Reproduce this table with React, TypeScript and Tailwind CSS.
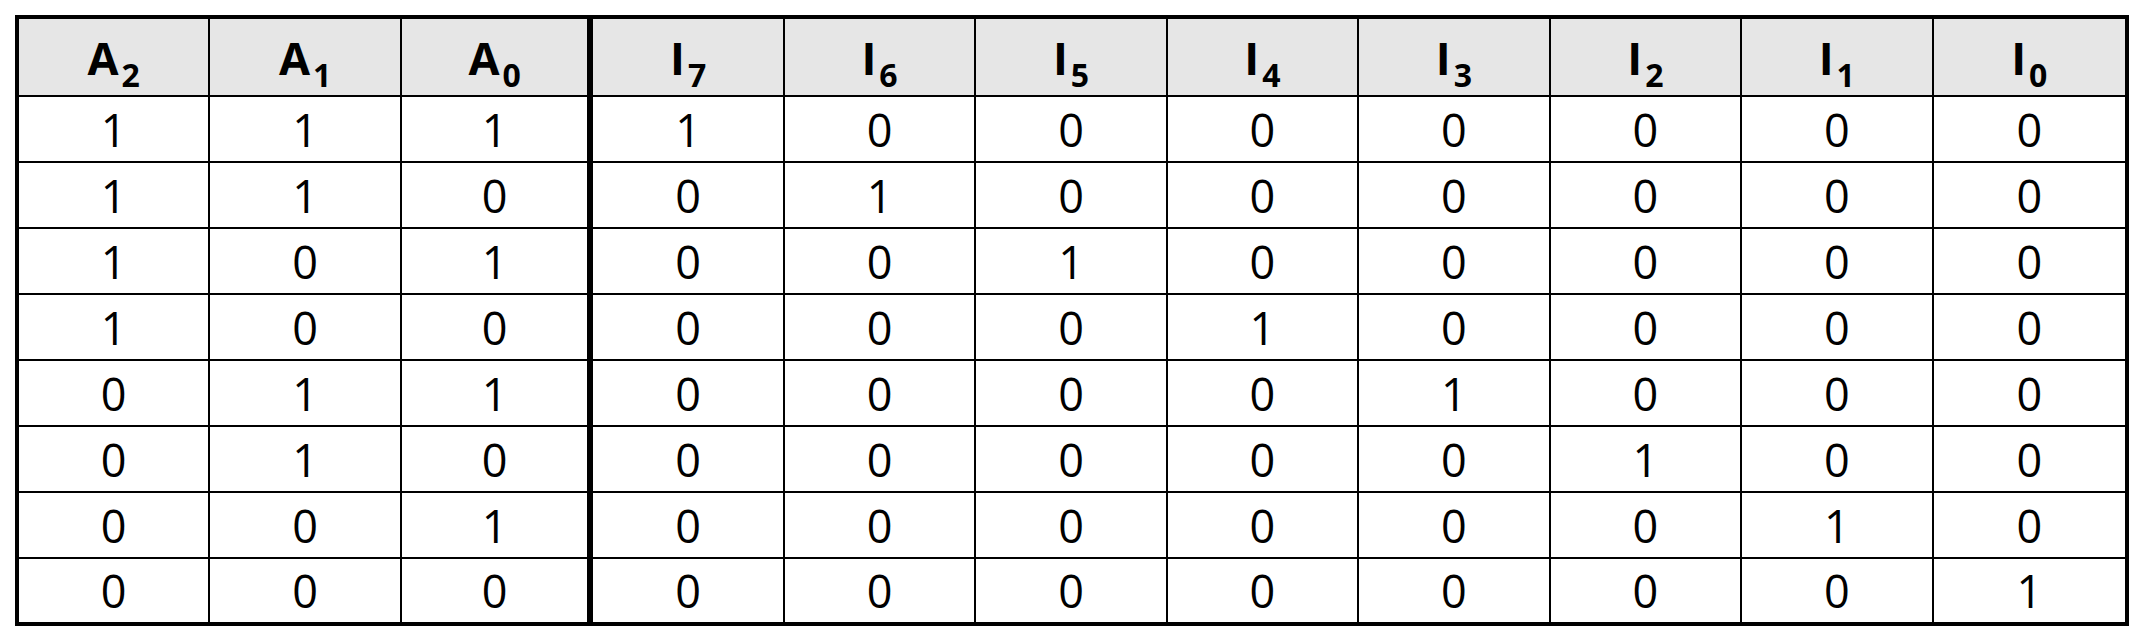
const headers = [
  { base: 'A', sub: '2' },
  { base: 'A', sub: '1' },
  { base: 'A', sub: '0' },
  { base: 'I', sub: '7' },
  { base: 'I', sub: '6' },
  { base: 'I', sub: '5' },
  { base: 'I', sub: '4' },
  { base: 'I', sub: '3' },
  { base: 'I', sub: '2' },
  { base: 'I', sub: '1' },
  { base: 'I', sub: '0' },
];

// 3-to-8 decoder: inputs 111 down to 000, one-hot outputs I7..I0
const rows = Array.from({ length: 8 }, (_, i) => {
  const n = 7 - i;
  const inputs = [(n >> 2) & 1, (n >> 1) & 1, n & 1];
  const outputs = Array.from({ length: 8 }, (_, j) => (7 - j === n ? 1 : 0));
  return [...inputs, ...outputs];
});

function cellBorder(col: number, row: number, lastRow: boolean) {
  const right = col === 2 ? 'border-r-[6px]' : col === 10 ? 'border-r-0' : 'border-r-2';
  const bottom = lastRow ? 'border-b-0' : 'border-b-2';
  return `${right} ${bottom} border-black`;
}

export default function App() {
  return (
    <div className="min-h-screen bg-white pt-[15px] pl-[15px]" style={{ fontFamily: '"Open Sans", "Noto Sans", sans-serif' }}>
      <table className="table-fixed w-[2114px] border-separate border-spacing-0 border-4 border-black text-black">
        <thead>
          <tr className="h-[78px] bg-[#e6e6e6]">
            {headers.map((h, c) => (
              <th key={c} className={`${cellBorder(c, 0, false)} p-0 text-center align-middle font-bold text-[45px] leading-none`}>
                {h.base}
                <sub className="text-[32px] -bottom-[12px] ml-[3px] font-bold">{h.sub}</sub>
              </th>
            ))}
          </tr>
        </thead>
        <tbody>
          {rows.map((r, i) => (
            <tr key={i} className={i === rows.length - 1 ? 'h-[63px]' : 'h-[66px]'}>
              {r.map((v, c) => (
                <td key={c} className={`${cellBorder(c, i, i === rows.length - 1)} p-0 text-center align-middle text-[45px] leading-none`}>
                  {v}
                </td>
              ))}
            </tr>
          ))}
        </tbody>
      </table>
    </div>
  );
}
